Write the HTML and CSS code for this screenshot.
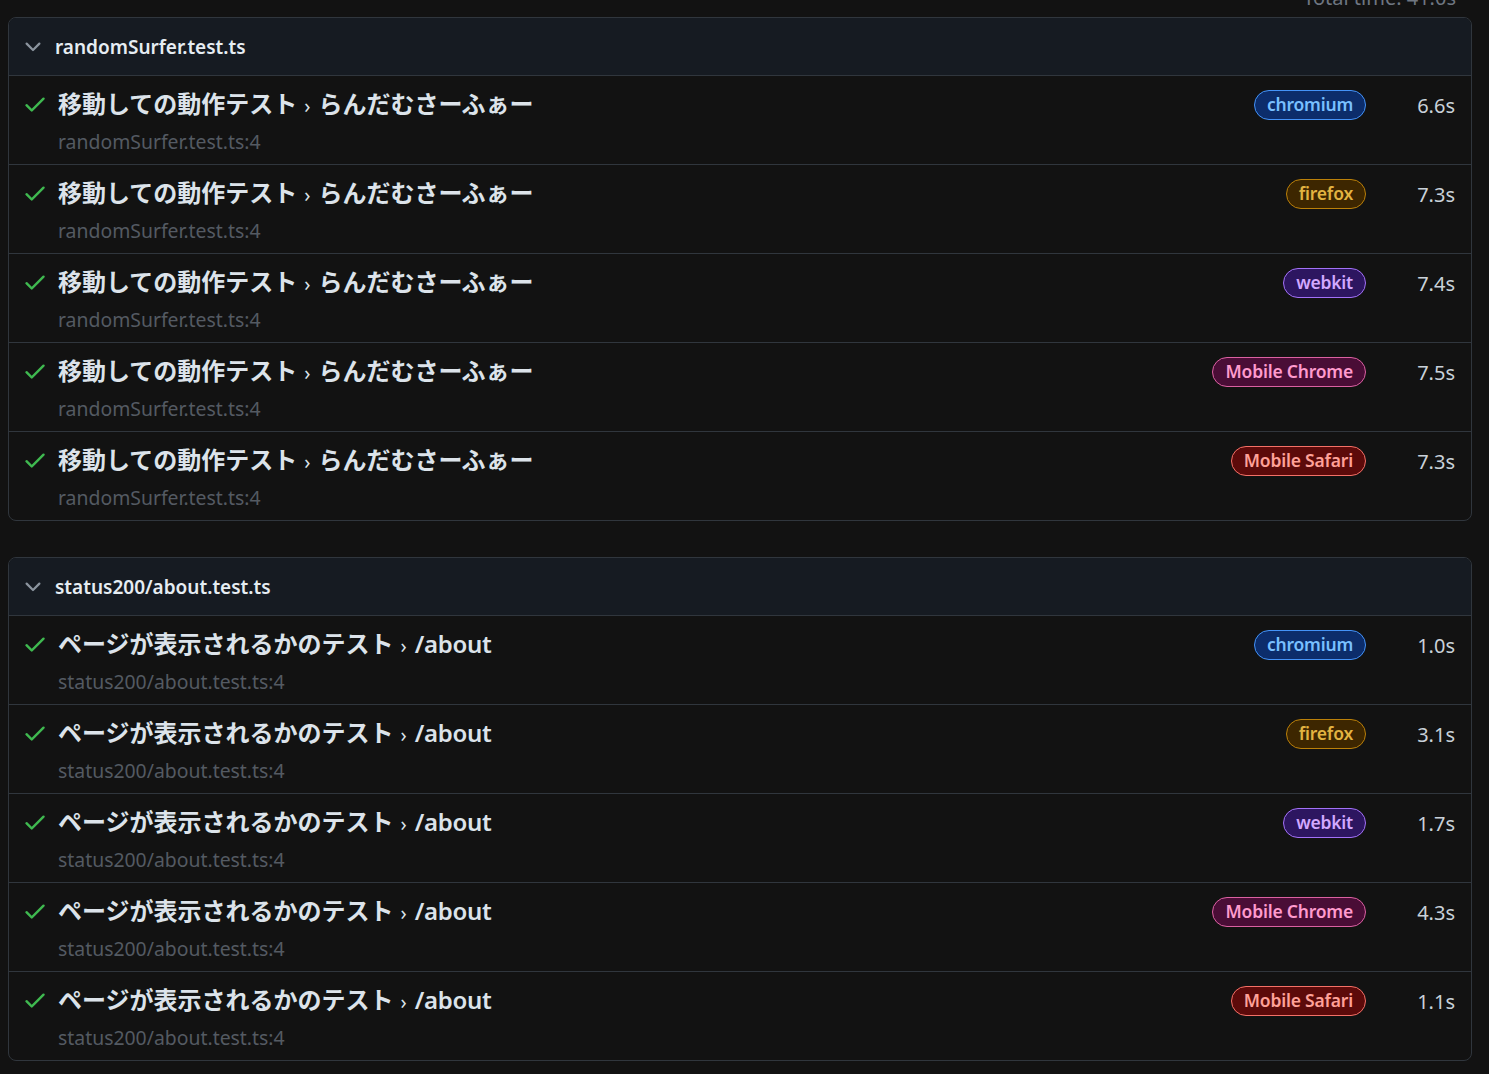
FILE: index.html
```html
<!DOCTYPE html>
<html lang="ja">
<head>
<meta charset="utf-8">
<title>Playwright Test Report</title>
<link rel="stylesheet" href="styles.css">
</head>
<body>
<div class="page">
  <div class="summary">Total time: 41.0s</div>
  <div class="files">
    <section class="file">
      <div class="file-header">
        <svg class="chevron" viewBox="0 0 16 16" width="24" height="24"><path d="M12.78 5.22a.749.749 0 0 1 0 1.06l-4.25 4.25a.749.749 0 0 1-1.06 0L3.22 6.28a.749.749 0 1 1 1.06-1.06L8 8.939l3.72-3.719a.749.749 0 0 1 1.060 0Z"/></svg>
        <span class="file-name">randomSurfer.test.ts</span>
      </div>
      <div class="test">
        <svg class="check" viewBox="0 0 16 16" width="26" height="26"><path d="M13.78 4.22a.75.75 0 0 1 0 1.06l-7.25 7.25a.75.75 0 0 1-1.06 0L2.22 9.28a.751.751 0 0 1 .018-1.042.751.751 0 0 1 1.042-.018L6 10.94l6.72-6.72a.75.75 0 0 1 1.06 0Z"/></svg>
        <div class="test-body">
          <div class="test-title">移動しての動作テスト<span class="sep">›</span>らんだむさーふぁー</div>
          <div class="test-loc">randomSurfer.test.ts:4</div>
        </div>
        <div class="test-meta"><span class="badge b-chromium">chromium</span><span class="dur">6.6s</span></div>
      </div>
      <div class="test">
        <svg class="check" viewBox="0 0 16 16" width="26" height="26"><path d="M13.78 4.22a.75.75 0 0 1 0 1.06l-7.25 7.25a.75.75 0 0 1-1.06 0L2.22 9.28a.751.751 0 0 1 .018-1.042.751.751 0 0 1 1.042-.018L6 10.94l6.72-6.72a.75.75 0 0 1 1.06 0Z"/></svg>
        <div class="test-body">
          <div class="test-title">移動しての動作テスト<span class="sep">›</span>らんだむさーふぁー</div>
          <div class="test-loc">randomSurfer.test.ts:4</div>
        </div>
        <div class="test-meta"><span class="badge b-firefox">firefox</span><span class="dur">7.3s</span></div>
      </div>
      <div class="test">
        <svg class="check" viewBox="0 0 16 16" width="26" height="26"><path d="M13.78 4.22a.75.75 0 0 1 0 1.06l-7.25 7.25a.75.75 0 0 1-1.06 0L2.22 9.28a.751.751 0 0 1 .018-1.042.751.751 0 0 1 1.042-.018L6 10.94l6.72-6.72a.75.75 0 0 1 1.06 0Z"/></svg>
        <div class="test-body">
          <div class="test-title">移動しての動作テスト<span class="sep">›</span>らんだむさーふぁー</div>
          <div class="test-loc">randomSurfer.test.ts:4</div>
        </div>
        <div class="test-meta"><span class="badge b-webkit">webkit</span><span class="dur">7.4s</span></div>
      </div>
      <div class="test">
        <svg class="check" viewBox="0 0 16 16" width="26" height="26"><path d="M13.78 4.22a.75.75 0 0 1 0 1.06l-7.25 7.25a.75.75 0 0 1-1.06 0L2.22 9.28a.751.751 0 0 1 .018-1.042.751.751 0 0 1 1.042-.018L6 10.94l6.72-6.72a.75.75 0 0 1 1.06 0Z"/></svg>
        <div class="test-body">
          <div class="test-title">移動しての動作テスト<span class="sep">›</span>らんだむさーふぁー</div>
          <div class="test-loc">randomSurfer.test.ts:4</div>
        </div>
        <div class="test-meta"><span class="badge b-mchrome">Mobile Chrome</span><span class="dur">7.5s</span></div>
      </div>
      <div class="test">
        <svg class="check" viewBox="0 0 16 16" width="26" height="26"><path d="M13.78 4.22a.75.75 0 0 1 0 1.06l-7.25 7.25a.75.75 0 0 1-1.06 0L2.22 9.28a.751.751 0 0 1 .018-1.042.751.751 0 0 1 1.042-.018L6 10.94l6.72-6.72a.75.75 0 0 1 1.06 0Z"/></svg>
        <div class="test-body">
          <div class="test-title">移動しての動作テスト<span class="sep">›</span>らんだむさーふぁー</div>
          <div class="test-loc">randomSurfer.test.ts:4</div>
        </div>
        <div class="test-meta"><span class="badge b-msafari">Mobile Safari</span><span class="dur">7.3s</span></div>
      </div>
    </section>

    <section class="file">
      <div class="file-header">
        <svg class="chevron" viewBox="0 0 16 16" width="24" height="24"><path d="M12.78 5.22a.749.749 0 0 1 0 1.06l-4.25 4.25a.749.749 0 0 1-1.06 0L3.22 6.28a.749.749 0 1 1 1.06-1.06L8 8.939l3.72-3.719a.749.749 0 0 1 1.06 0Z"/></svg>
        <span class="file-name">status200/about.test.ts</span>
      </div>
      <div class="test">
        <svg class="check" viewBox="0 0 16 16" width="26" height="26"><path d="M13.78 4.22a.75.75 0 0 1 0 1.06l-7.25 7.25a.75.75 0 0 1-1.06 0L2.22 9.28a.751.751 0 0 1 .018-1.042.751.751 0 0 1 1.042-.018L6 10.94l6.72-6.72a.75.75 0 0 1 1.06 0Z"/></svg>
        <div class="test-body">
          <div class="test-title">ページが表示されるかのテスト<span class="sep">›</span><span class="latin">/about</span></div>
          <div class="test-loc">status200/about.test.ts:4</div>
        </div>
        <div class="test-meta"><span class="badge b-chromium">chromium</span><span class="dur">1.0s</span></div>
      </div>
      <div class="test">
        <svg class="check" viewBox="0 0 16 16" width="26" height="26"><path d="M13.78 4.22a.75.75 0 0 1 0 1.06l-7.25 7.25a.75.75 0 0 1-1.06 0L2.22 9.28a.751.751 0 0 1 .018-1.042.751.751 0 0 1 1.042-.018L6 10.94l6.72-6.72a.75.75 0 0 1 1.06 0Z"/></svg>
        <div class="test-body">
          <div class="test-title">ページが表示されるかのテスト<span class="sep">›</span><span class="latin">/about</span></div>
          <div class="test-loc">status200/about.test.ts:4</div>
        </div>
        <div class="test-meta"><span class="badge b-firefox">firefox</span><span class="dur">3.1s</span></div>
      </div>
      <div class="test">
        <svg class="check" viewBox="0 0 16 16" width="26" height="26"><path d="M13.78 4.22a.75.75 0 0 1 0 1.06l-7.25 7.25a.75.75 0 0 1-1.06 0L2.22 9.28a.751.751 0 0 1 .018-1.042.751.751 0 0 1 1.042-.018L6 10.94l6.72-6.72a.75.75 0 0 1 1.06 0Z"/></svg>
        <div class="test-body">
          <div class="test-title">ページが表示されるかのテスト<span class="sep">›</span><span class="latin">/about</span></div>
          <div class="test-loc">status200/about.test.ts:4</div>
        </div>
        <div class="test-meta"><span class="badge b-webkit">webkit</span><span class="dur">1.7s</span></div>
      </div>
      <div class="test">
        <svg class="check" viewBox="0 0 16 16" width="26" height="26"><path d="M13.78 4.22a.75.75 0 0 1 0 1.06l-7.25 7.25a.75.75 0 0 1-1.06 0L2.22 9.28a.751.751 0 0 1 .018-1.042.751.751 0 0 1 1.042-.018L6 10.94l6.72-6.72a.75.75 0 0 1 1.06 0Z"/></svg>
        <div class="test-body">
          <div class="test-title">ページが表示されるかのテスト<span class="sep">›</span><span class="latin">/about</span></div>
          <div class="test-loc">status200/about.test.ts:4</div>
        </div>
        <div class="test-meta"><span class="badge b-mchrome">Mobile Chrome</span><span class="dur">4.3s</span></div>
      </div>
      <div class="test">
        <svg class="check" viewBox="0 0 16 16" width="26" height="26"><path d="M13.78 4.22a.75.75 0 0 1 0 1.06l-7.25 7.25a.75.75 0 0 1-1.06 0L2.22 9.28a.751.751 0 0 1 .018-1.042.751.751 0 0 1 1.042-.018L6 10.94l6.72-6.72a.75.75 0 0 1 1.06 0Z"/></svg>
        <div class="test-body">
          <div class="test-title">ページが表示されるかのテスト<span class="sep">›</span><span class="latin">/about</span></div>
          <div class="test-loc">status200/about.test.ts:4</div>
        </div>
        <div class="test-meta"><span class="badge b-msafari">Mobile Safari</span><span class="dur">1.1s</span></div>
      </div>
    </section>
  </div>
</div>
</body>
</html>
```

FILE: styles.css
```css
html, body {
  margin: 0;
  padding: 0;
  background: #121212;
  overflow: hidden;
}

body {
  font-family: "Noto Sans", "Noto Sans CJK JP", sans-serif;
  color: #c9d1d9;
}

.page {
  padding: 0 17px 0 8px;
}

.summary {
  margin-top: -14px;
  height: 31px;
  line-height: 24px;
  font-size: 20px;
  color: #6e7681;
  text-align: right;
  padding-right: 16px;
}

.files {
  display: flex;
  flex-direction: column;
  gap: 36px;
}

.file {
  border: 1px solid #30363d;
  border-radius: 8px;
  overflow: hidden;
}

.file-header {
  height: 57px;
  background: #161b22;
  border-bottom: 1px solid #30363d;
  display: flex;
  align-items: center;
  padding-left: 12px;
}

.chevron {
  fill: #8b949e;
  width: 24px;
  height: 24px;
  margin-right: 10px;
  flex: none;
}

.file-name {
  font-size: 19px;
  font-weight: 600;
  color: #e6edf3;
  line-height: 28px;
}

.test {
  height: 88px;
  display: flex;
  align-items: flex-start;
  padding: 12px 16px 0 13px;
  box-sizing: border-box;
}

.test + .test {
  border-top: 1px solid #30363d;
  height: 89px;
}

.check {
  fill: #3fb950;
  width: 26px;
  height: 26px;
  margin-top: 3px;
  margin-right: 10px;
  flex: none;
}

.test-body {
  flex: 1;
  min-width: 0;
}

.test-title {
  font-size: 24px;
  font-weight: 700;
  line-height: 32px;
  color: #dce3ea;
  white-space: nowrap;
}

.latin {
  font-weight: 600;
  letter-spacing: -0.3px;
}

.sep {
  font-weight: 400;
  font-size: 20px;
  margin: 0 8px 0 7px;
}

.test-loc {
  margin-top: 6px;
  font-size: 19.4px;
  line-height: 28px;
  color: #545a62;
}

.test-meta {
  display: flex;
  align-items: center;
  height: 32px;
  margin-top: 1px;
}

.badge {
  display: inline-flex;
  align-items: center;
  height: 28px;
  padding: 0 12px;
  border: 1px solid;
  border-radius: 15px;
  font-size: 17.5px;
  font-weight: 600;
  letter-spacing: -0.2px;
  line-height: 1;
}

.b-chromium { background: #0c2d6b; border-color: #4493f8; color: #79c0ff; }
.b-firefox  { background: #3d2600; border-color: #bb8009; color: #e3b341; }
.b-webkit   { background: #2d1660; border-color: #a371f7; color: #d2a8ff; }
.b-mchrome  { background: #4a0d36; border-color: #db61a2; color: #ff9bce; }
.b-msafari  { background: #5c0a0a; border-color: #f47067; color: #ffa198; }

.dur {
  width: 89px;
  text-align: right;
  font-size: 20px;
  color: #c9d1d9;
}
```
